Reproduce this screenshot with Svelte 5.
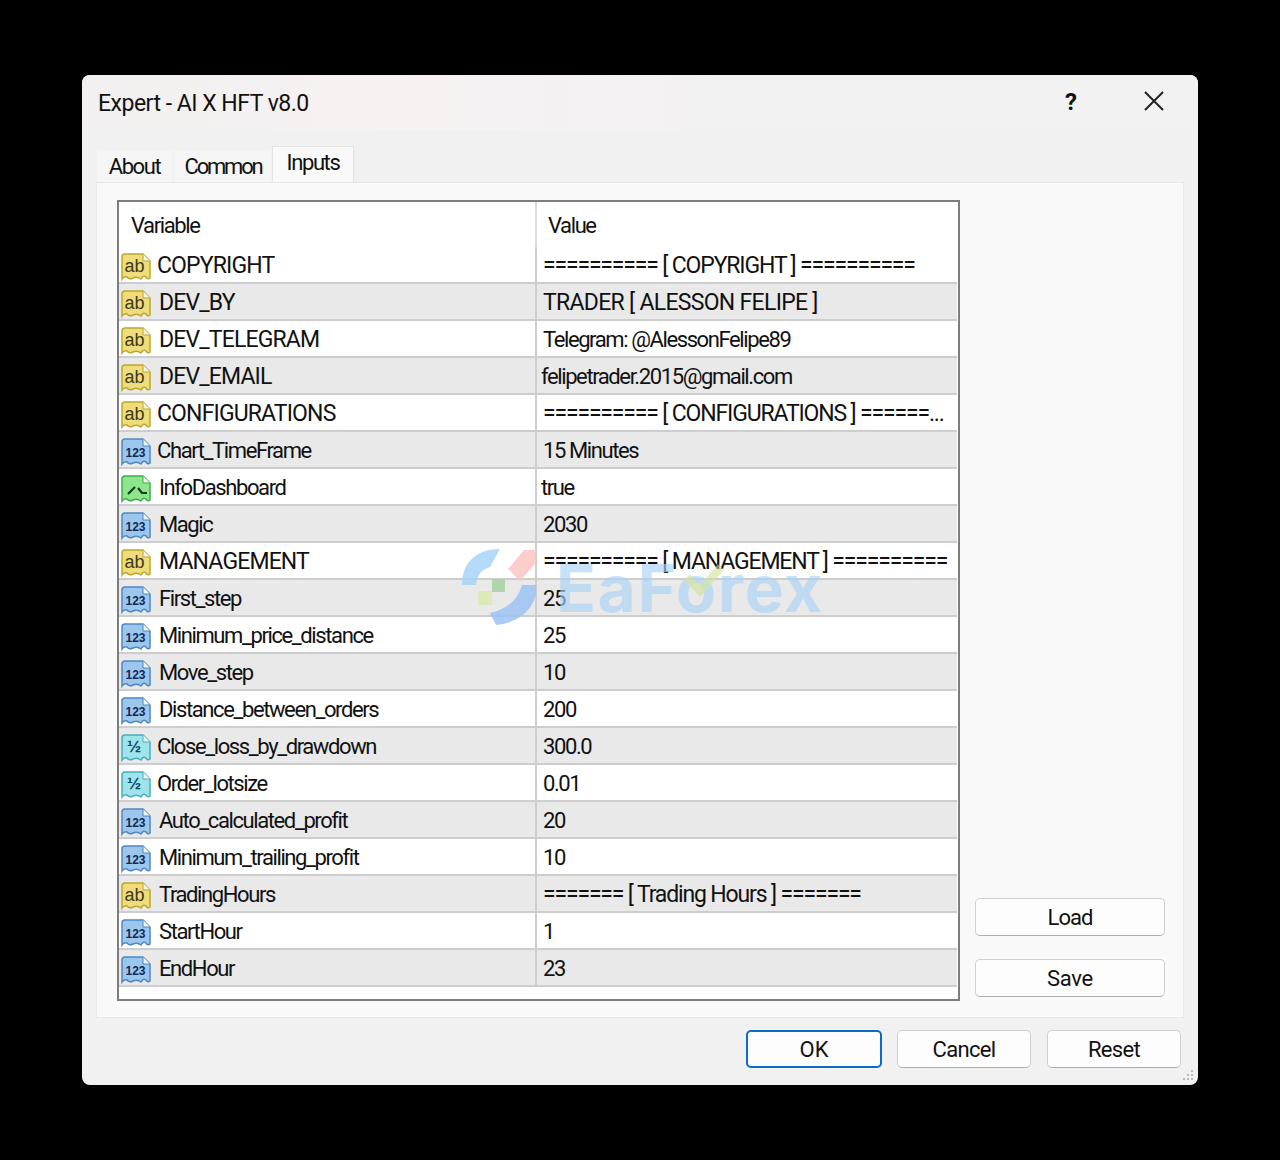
<script lang="ts">
	type Kind = 'ab' | 'int' | 'dbl' | 'bool';
	interface Row {
		name: string;
		value: string;
		kind: Kind;
		tightName?: boolean;
		tightValue?: boolean;
	}

	const rows: Row[] = [
		{ name: 'COPYRIGHT', value: '========== [ COPYRIGHT ] ==========', kind: 'ab', tightName: true },
		{ name: 'DEV_BY', value: 'TRADER [ ALESSON FELIPE ]', kind: 'ab' },
		{ name: 'DEV_TELEGRAM', value: 'Telegram: @AlessonFelipe89', kind: 'ab' },
		{ name: 'DEV_EMAIL', value: 'felipetrader.2015@gmail.com', kind: 'ab', tightValue: true },
		{ name: 'CONFIGURATIONS', value: '========== [ CONFIGURATIONS ] ======...', kind: 'ab', tightName: true },
		{ name: 'Chart_TimeFrame', value: '15 Minutes', kind: 'int', tightName: true },
		{ name: 'InfoDashboard', value: 'true', kind: 'bool', tightValue: true },
		{ name: 'Magic', value: '2030', kind: 'int' },
		{ name: 'MANAGEMENT', value: '========== [ MANAGEMENT ] ==========', kind: 'ab' },
		{ name: 'First_step', value: '25', kind: 'int' },
		{ name: 'Minimum_price_distance', value: '25', kind: 'int' },
		{ name: 'Move_step', value: '10', kind: 'int' },
		{ name: 'Distance_between_orders', value: '200', kind: 'int' },
		{ name: 'Close_loss_by_drawdown', value: '300.0', kind: 'dbl', tightName: true },
		{ name: 'Order_lotsize', value: '0.01', kind: 'dbl', tightName: true },
		{ name: 'Auto_calculated_profit', value: '20', kind: 'int' },
		{ name: 'Minimum_trailing_profit', value: '10', kind: 'int' },
		{ name: 'TradingHours', value: '======= [ Trading Hours ] =======', kind: 'ab' },
		{ name: 'StartHour', value: '1', kind: 'int' },
		{ name: 'EndHour', value: '23', kind: 'int' }
	];

	const iconColors: Record<Kind, { fill: string; edge: string; ink: string; label: string }> = {
		ab: { fill: '#efdc7a', edge: '#bfa62e', ink: '#3d3a1a', label: 'ab' },
		int: { fill: '#9cc6ec', edge: '#4f88c2', ink: '#0f2a58', label: '123' },
		dbl: { fill: '#9fe4ea', edge: '#46aebf', ink: '#124a66', label: '½' },
		bool: { fill: '#8fe58c', edge: '#3fae4c', ink: '#123f18', label: '' }
	};

	const isCaps = (text: string) => /[A-Z]/.test(text) && text === text.toUpperCase();
	const isRule = (text: string) => text.startsWith('=');
</script>

{#snippet typeIcon(kind: Kind)}
	{@const c = iconColors[kind]}
	<svg class="type-icon" width="31" height="30" viewBox="0 0 31 30" aria-hidden="true">
		<path
			d="M4 2 H22 L29 9 V26 Q27 28 25 25 Q22 23 20 27 Q16 24 12 26 Q8 28 6 25 Q3 24 1 27 V5 Q1 2 4 2 Z"
			fill={c.fill}
			stroke={c.edge}
			stroke-width="1.5"
		/>
		<path d="M22 2 V9 H29" fill="#f4f4ea" stroke={c.edge} stroke-width="1" />
		{#if kind === 'bool'}
			<path d="M7 20 L14 13 M17 14 L21 19 H26" fill="none" stroke={c.ink} stroke-width="2.2" />
		{:else if kind === 'int'}
			<text x="14.5" y="20" text-anchor="middle" class="icon-num" fill={c.ink}>{c.label}</text>
		{:else if kind === 'dbl'}
			<text x="13" y="19" text-anchor="middle" class="icon-half" fill={c.ink}>{c.label}</text>
		{:else}
			<text x="13.5" y="20" text-anchor="middle" class="icon-ab" fill={c.ink}>{c.label}</text>
		{/if}
	</svg>
{/snippet}

<div class="dialog">
	<header class="titlebar">
		<span class="title">Expert - AI X HFT v8.0</span>
		<span class="help">?</span>
		<svg class="close" width="20" height="20" viewBox="0 0 20 20" aria-hidden="true">
			<path d="M1 1 L19 19 M19 1 L1 19" stroke="#222" stroke-width="2" fill="none" />
		</svg>
	</header>

	<nav class="tabs">
		<span class="tab tab-about">About</span>
		<span class="tab tab-common">Common</span>
		<span class="tab active">Inputs</span>
	</nav>

	<section class="panel">
		<div class="list">
			<div class="list-head">
				<span class="col-name head-name">Variable</span>
				<span class="col-value head-value">Value</span>
			</div>
			{#each rows as row, i}
				<div class="row" class:alt={i % 2 === 1}>
					<div class="col-name name-cell">
						{@render typeIcon(row.kind)}
						<span class="name" class:tight={row.tightName} class:caps={isCaps(row.name)}>{row.name}</span>
					</div>
					<div
						class="col-value value-cell"
						class:tight={row.tightValue}
						class:caps={isCaps(row.value) && !isRule(row.value)}
						class:rule={isRule(row.value)}
					>
						{row.value}
					</div>
				</div>
			{/each}
		</div>
		<div class="side">
			<button class="btn side-btn load">Load</button>
			<button class="btn side-btn save">Save</button>
		</div>
	</section>

	<footer class="footer">
		<button class="btn primary ok">OK</button>
		<button class="btn cancel">Cancel</button>
		<button class="btn reset">Reset</button>
		<svg class="grip" width="16" height="16" viewBox="0 0 16 16" aria-hidden="true">
			<g fill="#b9b9b9">
				<rect x="11" y="2" width="2" height="2" />
				<rect x="7" y="6" width="2" height="2" />
				<rect x="11" y="6" width="2" height="2" />
				<rect x="3" y="10" width="2" height="2" />
				<rect x="7" y="10" width="2" height="2" />
				<rect x="11" y="10" width="2" height="2" />
			</g>
		</svg>
	</footer>

	<div class="watermark" aria-hidden="true">
		<svg width="80" height="80" viewBox="0 0 80 80">
			<path d="M2 38 C2 14 18 2 40 2 L30 20 C22 22 17 28 16 38 Z" fill="#a8d4fa" />
			<path d="M48 22 L64 3 H76 V16 L60 34 Z" fill="#fbc6c4" />
			<path d="M62 38 H76 C78 60 60 76 36 78 L30 66 C48 62 58 52 62 38 Z" fill="#9cc3f2" />
			<rect x="32" y="32" width="13" height="13" fill="#a7d2a0" />
			<rect x="18" y="44" width="14" height="14" fill="#dcebb0" />
		</svg>
		<span class="wm-text">EaForex</span>
		<svg class="wm-tick" width="40" height="34" viewBox="0 0 40 34">
			<path d="M3 14 L16 28 L37 4" fill="none" stroke="#cfe39a" stroke-width="8" />
		</svg>
	</div>
</div>

<style>
	:global(body) {
		background: #000;
	}

	.dialog {
		position: relative;
		box-sizing: border-box;
		width: 1116px;
		height: 1010px;
		margin: 75px 0 75px 82px;
		display: flex;
		flex-direction: column;
		border-radius: 8px;
		background: #f1f1f1;
		color: #111;
		font-family: Roboto, 'Open Sans', sans-serif;
		font-size: 22px;
		letter-spacing: -1.4px;
		overflow: hidden;
	}

	.titlebar {
		box-sizing: border-box;
		height: 55px;
		display: flex;
		align-items: center;
		padding: 0 34px 1px 16px;
		background: linear-gradient(90deg, #f2f0f0, #f8f1f2 28%, #f2f2f2 60%);
	}

	.title {
		flex: 1;
		font-size: 23px;
		letter-spacing: -0.5px;
		padding-top: 2px;
	}

	.help {
		margin-right: 67px;
		font-weight: 700;
		font-size: 24px;
		letter-spacing: 0;
	}

	.close {
		margin-bottom: 2px;
	}

	.tabs {
		height: 52px;
		display: flex;
		align-items: flex-end;
		padding-left: 15px;
		gap: 1px;
	}

	.tab {
		box-sizing: border-box;
		height: 32px;
		line-height: 33px;
		text-align: center;
		background: #f5f5f5;
	}

	.tab-about {
		width: 75px;
		margin-right: 2px;
	}

	.tab-common {
		width: 96px;
		letter-spacing: -2.2px;
	}

	.tab.active {
		width: 82px;
		height: 36px;
		line-height: 31px;
		background: #f9f9f9;
		border: 1px solid #e4e4e4;
		border-bottom: none;
	}

	.panel {
		box-sizing: border-box;
		width: 1088px;
		height: 836px;
		margin-left: 14px;
		padding: 17px 18px 18px 20px;
		display: flex;
		justify-content: space-between;
		background: #f9f9f9;
		border: 1px solid #e8e8e8;
	}

	.list {
		box-sizing: border-box;
		width: 843px;
		height: 801px;
		background: #fff;
		border: 2px solid #7d7d7d;
		padding-right: 1px;
	}

	.list-head {
		height: 45px;
		display: flex;
		align-items: center;
	}

	.col-name {
		box-sizing: border-box;
		width: 418px;
		flex: none;
	}

	.col-value {
		flex: 1;
		min-width: 0;
		white-space: nowrap;
	}

	.head-name {
		padding-left: 12px;
		height: 100%;
		line-height: 47px;
		border-right: 2px solid #dcdcdc;
	}

	.head-value {
		padding: 2px 0 0 11px;
	}

	.row {
		box-sizing: border-box;
		height: 37px;
		display: flex;
		align-items: center;
		border-bottom: 2px solid #cdcdcd;
		background: #fff;
	}

	.row.alt {
		background: #e9e9e9;
	}

	.name-cell {
		height: 100%;
		display: flex;
		align-items: center;
		padding-left: 2px;
		border-right: 2px solid #cdcdcd;
	}

	.type-icon {
		flex: none;
		margin-top: 4px;
	}

	.name {
		margin-left: 7px;
		padding-top: 2px;
		white-space: nowrap;
	}

	.name.tight {
		margin-left: 5px;
	}

	.name.caps {
		font-size: 23px;
		letter-spacing: -0.85px;
	}

	.value-cell {
		padding: 2px 0 0 6px;
	}

	.value-cell.tight {
		padding-left: 4px;
	}

	.value-cell.caps {
		font-size: 23px;
		letter-spacing: -0.7px;
	}

	.value-cell.rule {
		font-size: 23px;
		letter-spacing: -1.15px;
	}

	.icon-num {
		font: 700 12px 'Liberation Sans', sans-serif;
		letter-spacing: 0;
	}

	.icon-half {
		font: 700 17px 'Liberation Sans', sans-serif;
		letter-spacing: 0;
	}

	.icon-ab {
		font: 400 18px 'Liberation Sans', sans-serif;
		letter-spacing: 0;
	}

	.side {
		width: 190px;
		margin-bottom: 2px;
		display: flex;
		flex-direction: column;
		justify-content: flex-end;
		gap: 23px;
	}

	.btn {
		box-sizing: border-box;
		height: 38px;
		padding: 0;
		font: inherit;
		letter-spacing: -0.7px;
		color: #111;
		background: #fdfdfd;
		border: 1px solid #d0d0d0;
		border-bottom-color: #aeaeae;
		border-radius: 5px;
	}

	.side-btn {
		width: 190px;
	}

	.load {
		letter-spacing: -1px;
	}

	.save {
		letter-spacing: -0.3px;
	}

	.footer {
		position: relative;
		flex: 1;
		display: flex;
		align-items: flex-start;
		padding: 12px 0 0 664px;
	}

	.ok {
		width: 136px;
		letter-spacing: 0;
	}

	.primary {
		border: 2px solid #0a6cc4;
	}

	.cancel {
		width: 134px;
		margin-left: 15px;
	}

	.reset {
		width: 134px;
		margin-left: 16px;
	}

	.grip {
		position: absolute;
		right: 2px;
		bottom: 1px;
	}

	/* stamped over the table in the source picture */
	.watermark {
		position: absolute;
		left: 378px;
		top: 472px;
		display: flex;
		align-items: center;
		opacity: 0.85;
		pointer-events: none;
	}

	.wm-text {
		margin: 0 0 -2px 16px;
		font: 700 66px 'Inter', 'Liberation Sans', sans-serif;
		letter-spacing: 1.5px;
		color: #a9d3f6;
		opacity: 0.75;
		mix-blend-mode: multiply;
	}

	.wm-tick {
		position: absolute;
		left: 224px;
		top: 16px;
		opacity: 0.7;
	}
</style>
